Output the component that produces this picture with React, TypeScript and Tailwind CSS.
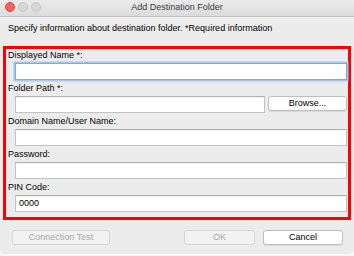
import React from "react";

const font = { fontFamily: '"Liberation Sans", Arial, sans-serif' };

function Field({ label, value, focused, children }: { label: string; value?: string; focused?: boolean; children?: React.ReactNode }) {
  return (
    <div className="flex flex-col gap-[2px]">
      <div className="h-[12px] pl-[2px] text-[9px] leading-[12px] text-black">{label}</div>
      <div className="flex gap-[3px] pl-[9px] pr-[1px]">
        <div
          className={
            "flex h-[17px] flex-1 items-center bg-white px-[3px] text-[9px] text-black " +
            (focused
              ? "border border-[#7da9de] shadow-[0_0_0_1.5px_#a6c8f0]"
              : "border border-[#c3c3c3] border-t-[#b0b0b0] shadow-[inset_0_1px_1px_rgba(0,0,0,0.06)]")
          }
        >
          {value}
        </div>
        {children}
      </div>
    </div>
  );
}

function Btn({ label, disabled, w }: { label: string; disabled?: boolean; w: string }) {
  return (
    <div
      className={
        "flex h-[15px] items-center justify-center rounded-[3px] border text-[9px] " +
        w +
        (disabled
          ? " border-[#d6d6d6] bg-[#f2f2f2] text-[#a8a8a8]"
          : " border-[#bdbdbd] bg-white text-black shadow-[0_1px_0_rgba(0,0,0,0.08)]")
      }
    >
      {label}
    </div>
  );
}

export default function App() {
  return (
    <div className="h-[256px] w-[354px] bg-[#f6f6f6]" style={font}>
      <div className="flex h-[254px] flex-col overflow-hidden rounded-b-[5px] bg-[#ececec]">
        <div className="relative flex h-[17px] items-center justify-center border-b border-[#c4c4c4] bg-gradient-to-b from-[#ebebeb] to-[#dcdcdc]">
          <div className="absolute left-[5px] top-[2px] flex gap-[3px]">
            <span className="h-[10px] w-[10px] rounded-full border border-[#e0443e] bg-[#fc605c]" />
            <span className="h-[10px] w-[10px] rounded-full border border-[#c8c8c8] bg-[#d6d6d6]" />
            <span className="h-[10px] w-[10px] rounded-full border border-[#c8c8c8] bg-[#d6d6d6]" />
          </div>
          <span className="text-[9px] text-[#3c3c3c]">Add Destination Folder</span>
        </div>
        <div className="mt-[5px] pl-[8px] text-[9px] leading-[12px] text-black">
          Specify information about destination folder. *Required information
        </div>
        <div className="mx-[3px] mt-[12px] flex flex-col gap-[2px] border-[3px] border-[#ff0000] pb-[5px]">
          <Field label="Displayed Name *:" focused />
          <Field label="Folder Path *:">
            <Btn label="Browse..." w="w-[79px]" />
          </Field>
          <Field label="Domain Name/User Name:" />
          <Field label="Password:" />
          <Field label="PIN Code:" value="0000" />
        </div>
        <div className="mt-[10px] flex items-center pl-[12px] pr-[11px]">
          <Btn label="Connection Test" disabled w="w-[98px]" />
          <div className="flex-1" />
          <Btn label="OK" disabled w="w-[71px]" />
          <div className="w-[8px]" />
          <Btn label="Cancel" w="w-[80px]" />
        </div>
      </div>
    </div>
  );
}
